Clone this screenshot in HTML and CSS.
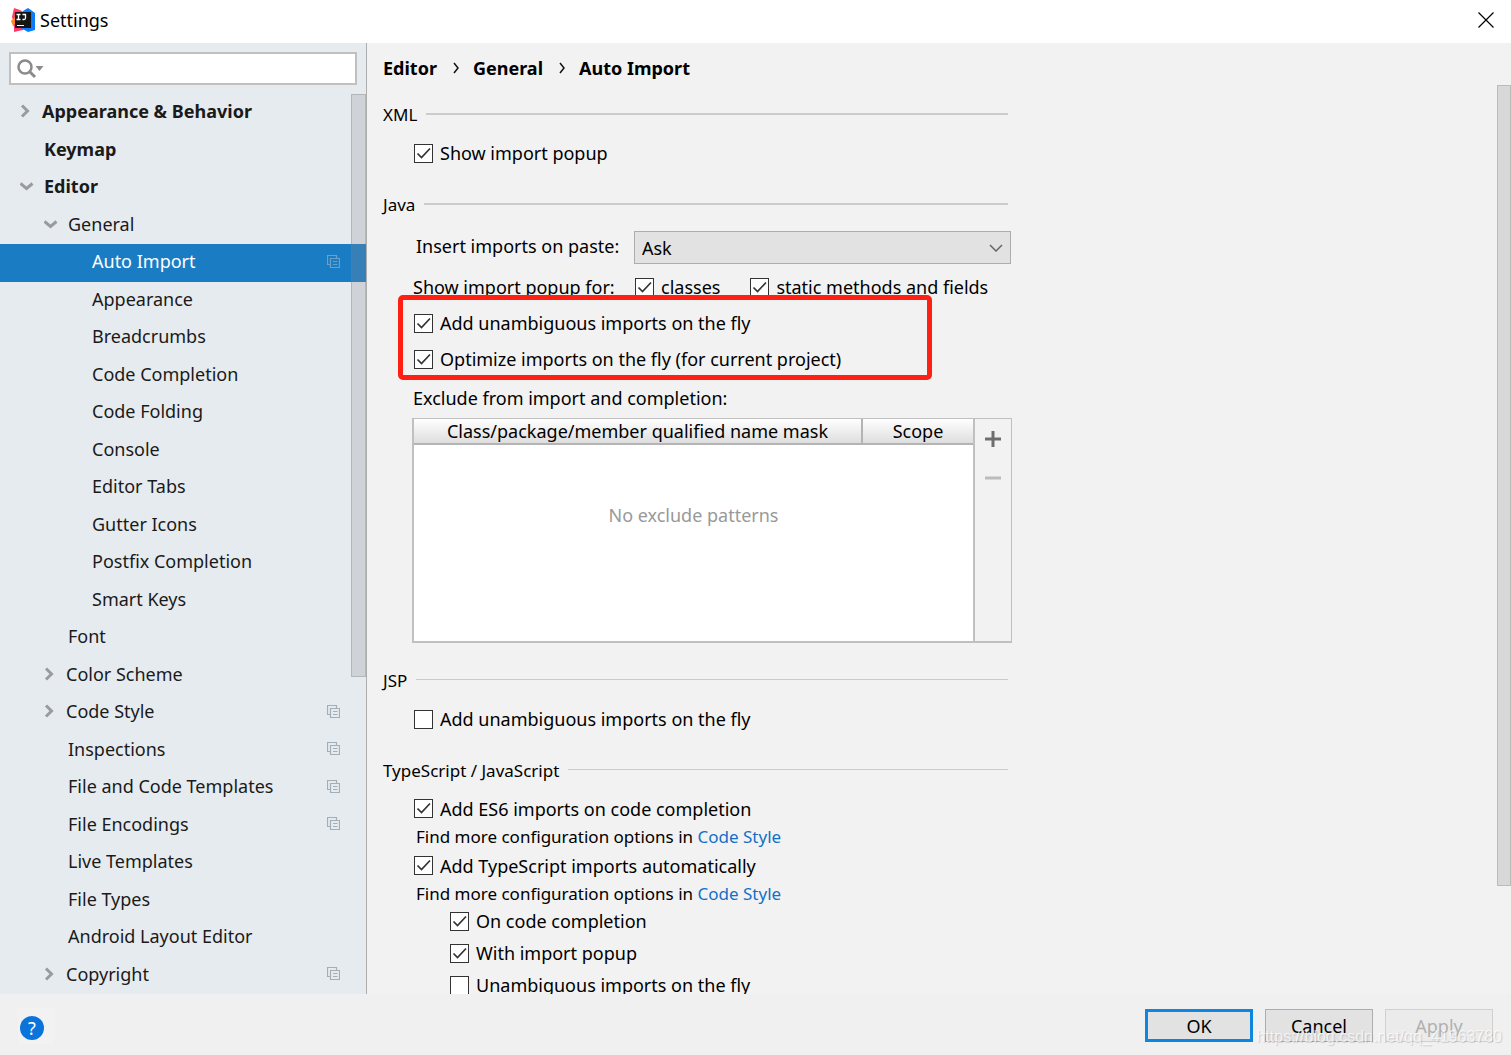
FILE: index.html
```html
<!DOCTYPE html>
<html lang="en">
<head>
<meta charset="utf-8">
<title>Settings</title>
<link rel="stylesheet" href="styles.css">
</head>
<body>
<svg class="sprite" aria-hidden="true">
  <symbol id="right" viewBox="0 0 16 16"><path d="M2 2.500 7.500 8 2 13.500" fill="none" stroke="#999b9d" stroke-width="3"/></symbol>
  <symbol id="down" viewBox="0 0 16 16"><path d="M0.500 5.500 6.500 10.500 12.500 5.500" fill="none" stroke="#999b9d" stroke-width="3"/></symbol>
  <symbol id="copy" viewBox="0 0 13 13"><path d="M3 9.500H.5V.5h9V3M3.500 3.500h9v9h-9zM6 6.500h4.500M6 9.500h4.500" fill="none" stroke="currentColor" stroke-width="1.200"/></symbol>
</svg>
<div class="window">
  <header class="titlebar">
    <svg class="logo" viewBox="0 0 24 24" aria-hidden="true">
      <path d="M1 9 3 0 9 2 14 5 8 16 3 15z" fill="#fc3f65"/>
      <path d="M0 13 4 9 8 20 2 18z" fill="#fb8a23"/>
      <path d="M3 24 3 16 14 20 12 22z" fill="#fd3a70"/>
      <path d="M12 3 17 0 24 5 24 22 17 24 10 20z" fill="#087cfa"/>
      <path d="M4 4h16v16H4z" fill="#151515"/>
      <path d="M5.500 6.500h4M7.500 6.500v5M5.500 11.500h4M11.500 6.500h3v3.500q0 1.500-1.500 1.500h-1.500" fill="none" stroke="#fff" stroke-width="1.300"/>
      <path d="M6 17.500h7" stroke="#fff"/>
    </svg>
    <h1>Settings</h1>
    <button class="close" type="button" aria-label="Close"><svg viewBox="0 0 16 16"><path d="M.5.5l15 15M15.500.500l-15 15" stroke="#000" stroke-width="1.200"/></svg></button>
  </header>
  <div class="body">
    <aside class="sidebar">
      <div class="search">
        <svg viewBox="0 0 28 20" aria-hidden="true"><circle cx="8" cy="8" r="6.500" fill="none" stroke="#8b8b8b" stroke-width="2.500"/><path d="M12.500 12.500l5.500 5.500" stroke="#8b8b8b" stroke-width="3"/><path d="M18.500 7h8l-4 5z" fill="#8b8b8b"/></svg>
        <input type="text" aria-label="Search settings">
      </div>
      <nav aria-label="Settings pages">
        <ul class="tree">
          <li><a class="top" href="#"><svg class="right"><use href="#right" width="16" height="16"/></svg>Appearance &amp; Behavior</a></li>
          <li><a class="top leaf" href="#">Keymap</a></li>
          <li><a class="top" href="#"><svg class="down"><use href="#down" width="16" height="16"/></svg>Editor</a></li>
          <li><a class="mid" href="#"><svg class="down"><use href="#down" width="16" height="16"/></svg>General</a></li>
          <li><a class="deep selected" href="#" aria-current="page">Auto Import<svg class="copy"><use href="#copy"/></svg></a></li>
          <li><a class="deep" href="#">Appearance</a></li>
          <li><a class="deep" href="#">Breadcrumbs</a></li>
          <li><a class="deep" href="#">Code Completion</a></li>
          <li><a class="deep" href="#">Code Folding</a></li>
          <li><a class="deep" href="#">Console</a></li>
          <li><a class="deep" href="#">Editor Tabs</a></li>
          <li><a class="deep" href="#">Gutter Icons</a></li>
          <li><a class="deep" href="#">Postfix Completion</a></li>
          <li><a class="deep" href="#">Smart Keys</a></li>
          <li><a class="mid leaf" href="#">Font</a></li>
          <li><a class="mid" href="#"><svg class="right"><use href="#right" width="16" height="16"/></svg>Color Scheme</a></li>
          <li><a class="mid" href="#"><svg class="right"><use href="#right" width="16" height="16"/></svg>Code Style<svg class="copy"><use href="#copy"/></svg></a></li>
          <li><a class="mid leaf" href="#">Inspections<svg class="copy"><use href="#copy"/></svg></a></li>
          <li><a class="mid leaf" href="#">File and Code Templates<svg class="copy"><use href="#copy"/></svg></a></li>
          <li><a class="mid leaf" href="#">File Encodings<svg class="copy"><use href="#copy"/></svg></a></li>
          <li><a class="mid leaf" href="#">Live Templates</a></li>
          <li><a class="mid leaf" href="#">File Types</a></li>
          <li><a class="mid leaf" href="#">Android Layout Editor</a></li>
          <li><a class="mid" href="#"><svg class="right"><use href="#right" width="16" height="16"/></svg>Copyright<svg class="copy"><use href="#copy"/></svg></a></li>
        </ul>
      </nav>
      <div class="thumb tree-thumb"></div>
    </aside>
    <main class="content">
      <div class="crumbs"><span>Editor</span><svg viewBox="0 0 36 24" aria-hidden="true"><path d="M17 7l4 5-4 5" fill="none" stroke="#111" stroke-width="1.500"/></svg><span>General</span><svg viewBox="0 0 36 24" aria-hidden="true"><path d="M17 7l4 5-4 5" fill="none" stroke="#111" stroke-width="1.500"/></svg><span>Auto Import</span></div>
      <section>
        <h2 class="strong">XML</h2>
        <div class="group">
          <label class="check"><input type="checkbox" checked>Show import popup</label>
        </div>
      </section>
      <section class="java">
        <h2 class="strong">Java</h2>
        <div class="group">
          <div class="field paste">
            <label for="paste">Insert imports on paste:</label>
            <select id="paste"><option>Ask</option></select>
          </div>
          <div class="field">
            <span>Show import popup for:</span>
            <div class="pair">
              <label class="check"><input type="checkbox" checked>classes</label>
              <label class="check"><input type="checkbox" checked>static methods and fields</label>
            </div>
          </div>
          <div class="marked">
            <label class="check"><input type="checkbox" checked>Add unambiguous imports on the fly</label>
            <label class="check"><input type="checkbox" checked>Optimize imports on the fly (for current project)</label>
          </div>
          <div class="caption" id="excl">Exclude from import and completion:</div>
          <div class="exclude">
            <table aria-labelledby="excl">
              <thead><tr><th>Class/package/member qualified name mask</th><th class="scope">Scope</th></tr></thead>
              <tbody><tr><td colspan="2">No exclude patterns</td></tr></tbody>
            </table>
            <div class="tools">
              <button type="button" aria-label="Add"><svg viewBox="0 0 16 16"><path d="M0 8h16M8 0v16" stroke="#6e6e6e" stroke-width="3"/></svg></button>
              <button type="button" aria-label="Remove" disabled><svg viewBox="0 0 16 16"><path d="M0 8h16" stroke="#bcbcbc" stroke-width="3"/></svg></button>
            </div>
          </div>
        </div>
      </section>
      <section>
        <h2>JSP</h2>
        <div class="group">
          <label class="check"><input type="checkbox">Add unambiguous imports on the fly</label>
        </div>
      </section>
      <section class="script">
        <h2>TypeScript / JavaScript</h2>
        <div class="group">
          <label class="check"><input type="checkbox" checked>Add ES6 imports on code completion</label>
          <p>Find more configuration options in <a href="#">Code Style</a></p>
          <label class="check"><input type="checkbox" checked>Add TypeScript imports automatically</label>
          <p>Find more configuration options in <a href="#">Code Style</a></p>
          <div class="nested">
            <label class="check"><input type="checkbox" checked>On code completion</label>
            <label class="check"><input type="checkbox" checked>With import popup</label>
            <label class="check"><input type="checkbox">Unambiguous imports on the fly</label>
          </div>
        </div>
      </section>
      <div class="thumb page-thumb"></div>
    </main>
  </div>
  <footer class="footer">
    <button class="help" type="button" aria-label="Help"><span>?</span></button>
    <div class="actions">
      <button class="primary" type="button">OK</button>
      <button type="button">Cancel</button>
      <button type="button" disabled>Apply</button>
    </div>
    <div class="watermark">https://blog.csdn.net/qq_41963780</div>
  </footer>
</div>
</body>
</html>
```
FILE: styles.css
```css
* { box-sizing: border-box; }

body {
  margin: 0;
  font: 18px/24px "Noto Sans", "Open Sans", sans-serif;
  color: #000;
  background: #f0f0f0;
}

button, input, select { font: inherit; color: inherit; }
.sprite { position: absolute; width: 0; height: 0; }

.window { display: flex; flex-direction: column; height: 100vh; overflow: hidden; }

.titlebar {
  flex: none;
  display: flex;
  align-items: center;
  height: 43px;
  padding: 0 17px 3px 11px;
  background: #fff;
}
.logo { width: 24px; height: 24px; }
.titlebar h1 { margin: 0 0 0 5px; font-size: 18px; font-weight: 400; }
.close { margin-left: auto; padding: 0; border: 0; background: none; width: 16px; height: 16px; }
.close svg { display: block; width: 16px; height: 16px; }

.body { flex: 1; display: flex; min-height: 0; }

.sidebar {
  position: relative;
  flex: none;
  display: flex;
  flex-direction: column;
  width: 367px;
  background: #e6ebef;
  border-right: 1px solid #adadad;
}
.search {
  flex: none;
  display: flex;
  align-items: center;
  height: 33px;
  margin: 9px 9px;
  padding-left: 6px;
  background: #fff;
  border: 2px solid #c0c0c0;
}
.search svg { flex: none; width: 28px; height: 20px; }
.search input { flex: 1; min-width: 0; border: 0; outline: 0; background: none; }

nav { flex: 1; min-height: 0; }
.tree { display: grid; grid-auto-rows: 1fr; height: 100%; margin: 0; padding: 0; list-style: none; }
.tree a {
  display: flex;
  align-items: center;
  height: 100%;
  color: #1a1a1a;
  text-decoration: none;
  padding: 0 26px 3px 0;
}
.tree svg { flex: none; height: 16px; }
.tree .right { width: 22px; }
.tree .down { width: 24px; }
.tree .copy { width: 13px; height: 13px; margin-left: auto; color: #a3afb8; }
.tree .top { padding-left: 20px; font-weight: 700; }
.tree .top.leaf { padding-left: 44px; }
.tree .mid { padding-left: 44px; }
.tree .mid.leaf { padding-left: 68px; }
.tree .deep { padding-left: 92px; }
.tree .selected { background: #1a7dc4; color: #fff; }
.tree .selected .copy { color: #6d9fc4; }

.thumb { position: absolute; background: rgba(140, 140, 145, .25); border: 1px solid rgba(120, 120, 120, .3); }
.tree-thumb { top: 51px; right: 0; width: 15px; height: 583px; }
.page-thumb { top: 42px; right: 0; width: 14px; height: 801px; }

.content { position: relative; flex: 1; min-width: 0; overflow: hidden; padding-left: 16px; background: #f2f2f2; }
.crumbs { display: flex; align-items: center; height: 50px; font-weight: 700; }
.crumbs svg { width: 36px; height: 24px; }

section { max-width: 629px; margin-bottom: 22px; }
.crumbs + section { margin-top: 10px; }
h2 { display: flex; gap: 9px; align-items: center; margin: 0 4px 8px 0; font-size: 17px; font-weight: 400; }
h2::after { content: ""; flex: 1; height: 1px; margin-bottom: 4px; background: #cbcbcb; }
h2.strong::after { height: 2px; margin-bottom: 2px; }
.group { padding-left: 30px; }

.check { display: flex; align-items: center; height: 36px; padding-left: 1px; white-space: nowrap; }
.check input {
  appearance: none;
  flex: none;
  width: 19px;
  height: 19px;
  margin: 0 7px 0 0;
  border: 1px solid #333;
  background: #fff;
}
.check input:checked {
  background: #fff url("data:image/svg+xml,%3Csvg xmlns='http://www.w3.org/2000/svg' viewBox='0 0 17 17'%3E%3Cpath d='M2.500 8.500 6.500 12.500 15 3.500' fill='none' stroke='%23333' stroke-width='1.700'/%3E%3C/svg%3E") center / 17px 17px no-repeat;
}

.java { margin-bottom: 27px; }
.java h2 { margin-bottom: 14px; }
.field { display: grid; grid-template-columns: 221px 1fr; align-items: center; white-space: nowrap; }
.paste { margin-bottom: 5px; }
.paste label { padding: 0 0 3px 3px; }
.field select {
  appearance: none;
  height: 33px;
  margin-right: 1px;
  padding: 0 7px;
  border: 1px solid #adadad;
  border-radius: 0;
  background: #e2e2e2 url("data:image/svg+xml,%3Csvg xmlns='http://www.w3.org/2000/svg' viewBox='0 0 14 8'%3E%3Cpath d='M1 1l6 6 6-6' fill='none' stroke='%23666' stroke-width='1.500'/%3E%3C/svg%3E") right 7px center / 14px 8px no-repeat;
}
.pair { display: flex; gap: 29px; }
.marked { position: relative; }
.marked::after {
  content: "";
  position: absolute;
  inset: -10px 80px -3px -15px;
  border: 5px solid #ff2014;
  border-radius: 5px;
  pointer-events: none;
}
.caption { margin: 9px 0 8px; }
.exclude { display: flex; height: 225px; margin-left: -1px; border: solid #c0c0c0; border-width: 1px 1px 2px 2px; }
table { flex: 1; border-collapse: separate; border-spacing: 0; background: #fff; border-right: 2px solid #c0c0c0; table-layout: fixed; }
th {
  height: 26px;
  padding: 0;
  font-weight: 400;
  white-space: nowrap;
  background: linear-gradient(#fff, #dedede);
  border-bottom: 2px solid #b4b4b4;
}
.scope { width: 112px; border-left: 2px solid #b4b4b4; }
td { padding: 58px 0 0; vertical-align: top; text-align: center; color: #999; }
.tools { flex: none; display: flex; flex-direction: column; align-items: center; gap: 23px; width: 36px; padding-top: 12px; }
.tools button { width: 16px; height: 16px; padding: 0; border: 0; background: none; }
.tools svg { display: block; width: 16px; height: 16px; }
.java + section { margin-top: -1px; }

.script h2 { margin-bottom: 11px; }
.script .group > .check { height: 29px; }
.script p { margin: 0; padding-left: 3px; font-size: 17px; line-height: 28px; }
.script a { color: #1370c8; text-decoration: none; }
.nested { display: grid; gap: 6px; padding-left: 36px; }
.nested .check { height: 26px; }

.footer {
  position: relative;
  flex: none;
  display: flex;
  align-items: center;
  justify-content: space-between;
  height: 61px;
  padding: 2px 18px 0 18px;
  background: #f0f0f0;
}
.help { display: flex; align-items: end; width: 36px; height: 36px; padding: 0 0 4px 2px; border: 0; background: #f2f2f2; }
.help span { width: 24px; height: 24px; border-radius: 50%; background: #0a74da; color: #fff; text-align: center; }
.actions { display: flex; gap: 12px; }
.actions button { width: 108px; height: 33px; padding: 0; border: 1px solid #adadad; background: #e2e2e2; }
.actions .primary { border: 3px solid #0d86e0; }
.actions button:disabled { border-color: #d0d0d0; background: #ebebeb; color: #b0b0b0; }
.watermark {
  position: absolute;
  right: 9px;
  bottom: 8px;
  font: 16px/20px "Liberation Sans", Arial, sans-serif;
  color: rgba(255, 255, 255, .7);
  text-shadow: 1px 1px 1px rgba(0, 0, 0, .15);
}
```
